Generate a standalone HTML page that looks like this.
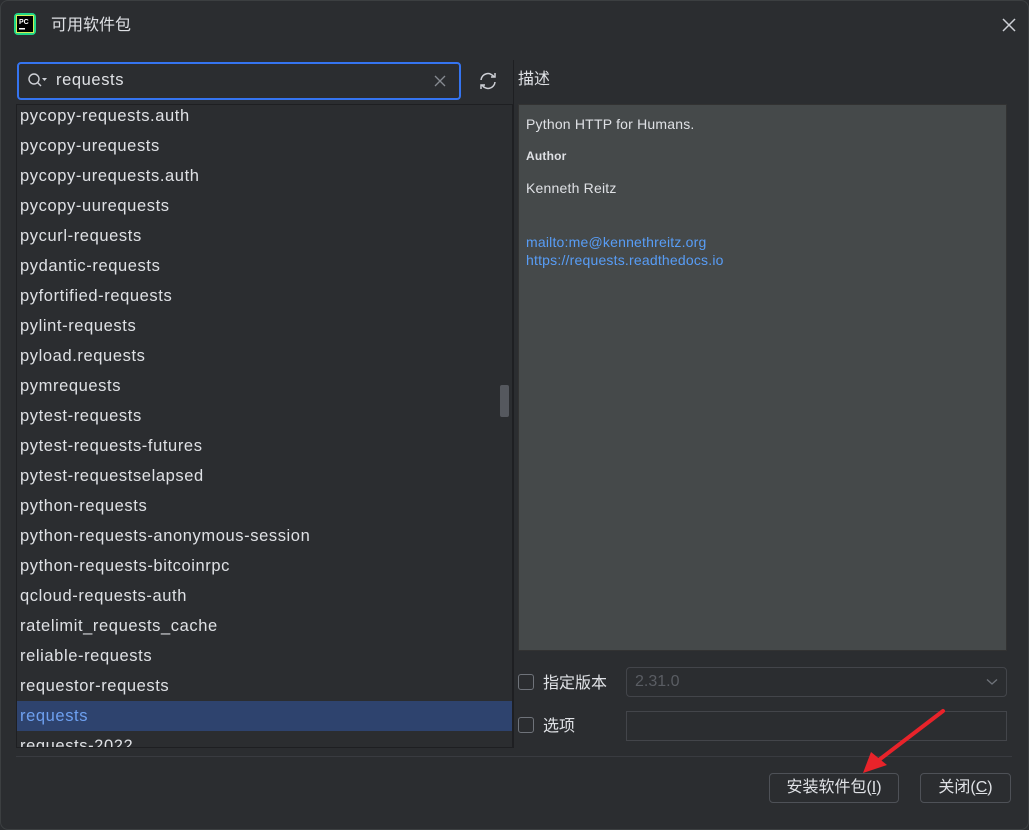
<!DOCTYPE html><html><head><meta charset="utf-8"><style>
body{margin:0;width:1029px;height:830px;background:#2b2d30;font-family:"Liberation Sans","Noto Sans CJK SC",sans-serif;color:#dfe1e5;position:relative;overflow:hidden}
.a{position:absolute}
.row{position:absolute;left:0;width:495px;height:30px;line-height:30px;padding-left:3px;font-size:16.5px;letter-spacing:0.6px;box-sizing:border-box}
.cb{position:absolute;width:16px;height:16px;border:1px solid #6f737a;border-radius:3px;box-sizing:border-box}
.btn{position:absolute;height:30px;border:1px solid #4e5157;border-radius:4px;box-sizing:border-box;text-align:center;line-height:28px;font-size:16px}
.cj{line-height:1;font-size:16px}
</style></head><body>
<div class="a" style="left:0;top:0;width:1029px;height:830px;border:1px solid #3c3f41;border-radius:8px;box-sizing:border-box"></div>
<svg class="a" style="left:14px;top:13px" width="22" height="22"><rect x="0" y="0" width="22" height="22" rx="4" fill="#21d789"/><rect x="2" y="2" width="18" height="18" fill="#fcf84a" opacity=".8"/><rect x="3" y="3" width="16" height="16" fill="#000"/><text x="5" y="11" font-size="7" fill="#fff" font-family="Liberation Sans" font-weight="bold">PC</text><rect x="5" y="15" width="6" height="1.5" fill="#fff"/></svg>
<div class="a cj" style="left:51px;top:18px;color:#dfe1e5">可用软件包</div>
<svg class="a" style="left:1001px;top:17px" width="16" height="16"><path d="M2 2L14 14M14 2L2 14" stroke="#ced0d6" stroke-width="1.5"/></svg>
<div class="a" style="left:16px;top:104px;width:497px;height:644px;border:1px solid #1e1f22;box-sizing:border-box;overflow:hidden">
<div class="row" style="top:-4px">pycopy-requests.auth</div>
<div class="row" style="top:26px">pycopy-urequests</div>
<div class="row" style="top:56px">pycopy-urequests.auth</div>
<div class="row" style="top:86px">pycopy-uurequests</div>
<div class="row" style="top:116px">pycurl-requests</div>
<div class="row" style="top:146px">pydantic-requests</div>
<div class="row" style="top:176px">pyfortified-requests</div>
<div class="row" style="top:206px">pylint-requests</div>
<div class="row" style="top:236px">pyload.requests</div>
<div class="row" style="top:266px">pymrequests</div>
<div class="row" style="top:296px">pytest-requests</div>
<div class="row" style="top:326px">pytest-requests-futures</div>
<div class="row" style="top:356px">pytest-requestselapsed</div>
<div class="row" style="top:386px">python-requests</div>
<div class="row" style="top:416px">python-requests-anonymous-session</div>
<div class="row" style="top:446px">python-requests-bitcoinrpc</div>
<div class="row" style="top:476px">qcloud-requests-auth</div>
<div class="row" style="top:506px">ratelimit_requests_cache</div>
<div class="row" style="top:536px">reliable-requests</div>
<div class="row" style="top:566px">requestor-requests</div>
<div class="row" style="top:596px;background:#2e436e;color:#6ea0f0">requests</div>
<div class="row" style="top:626px">requests-2022</div>
<div class="a" style="left:483px;top:280px;width:9px;height:32px;background:#55585e;border-radius:2px"></div>
</div>
<div class="a" style="left:17px;top:62px;width:444px;height:38px;border:2px solid #3574f0;border-radius:4px;box-sizing:border-box;background:#2b2d30"></div>
<svg class="a" style="left:27px;top:71px" width="24" height="20"><circle cx="7" cy="8" r="5" stroke="#ced0d6" stroke-width="1.4" fill="none"/><path d="M10.5 11.5L14 15" stroke="#ced0d6" stroke-width="1.4"/><path d="M15 7h5l-2.5 3z" fill="#ced0d6"/></svg>
<div class="a" style="left:56px;top:71px;font-size:16.5px;letter-spacing:0.6px;line-height:18px">requests</div>
<svg class="a" style="left:434px;top:75px" width="12" height="12"><path d="M1 1L11 11M11 1L1 11" stroke="#868a91" stroke-width="1.3"/></svg>
<svg class="a" style="left:477px;top:70px" width="22" height="22"><path d="M4 10a7 7 0 0 1 13-3M18 12a7 7 0 0 1-13 3" stroke="#ced0d6" stroke-width="1.5" fill="none"/><path d="M14 7h4V3" stroke="#ced0d6" stroke-width="1.5" fill="none"/><path d="M8 15H4v4" stroke="#ced0d6" stroke-width="1.5" fill="none"/></svg>
<div class="a" style="left:513px;top:60px;width:1px;height:688px;background:#1e1f22"></div>
<div class="a cj" style="left:518px;top:72px">描述</div>
<div class="a" style="left:518px;top:104px;width:489px;height:547px;background:#45494a;border:1px solid #323232;box-sizing:border-box;font-size:14px;color:#dfe1e5;letter-spacing:0.2px">
<div class="a" style="left:7px;top:11px">Python HTTP for Humans.</div>
<div class="a" style="left:7px;top:44px;font-size:12px;font-weight:bold">Author</div>
<div class="a" style="left:7px;top:75px">Kenneth Reitz</div>
<div class="a" style="left:7px;top:128px;color:#589df6;line-height:18px">mailto:me@kennethreitz.org<br>https://requests.readthedocs.io</div>
</div>
<div class="cb" style="left:518px;top:674px"></div>
<div class="a cj" style="left:543px;top:676px">指定版本</div>
<div class="a" style="left:626px;top:667px;width:381px;height:30px;border:1px solid #43454a;border-radius:4px;box-sizing:border-box;font-size:16px;color:#5a5d63;line-height:28px;padding-left:8px">2.31.0</div>
<svg class="a" style="left:986px;top:678px" width="12" height="8"><path d="M1 1.5L6 6L11 1.5" stroke="#6f737a" stroke-width="1.3" fill="none"/></svg>
<div class="cb" style="left:518px;top:717px"></div>
<div class="a cj" style="left:543px;top:719px">选项</div>
<div class="a" style="left:626px;top:711px;width:381px;height:30px;border:1px solid #43454a;box-sizing:border-box"></div>
<div class="a" style="left:16px;top:756px;width:996px;height:1px;background:#393b40"></div>
<div class="btn" style="left:769px;top:773px;width:130px">安装软件包(<u>I</u>)</div>
<div class="btn" style="left:920px;top:773px;width:91px">关闭(<u>C</u>)</div>
<svg class="a" style="left:855px;top:705px" width="95" height="75"><path d="M88 6L20 58" stroke="#e8232a" stroke-width="4" stroke-linecap="round"/><path d="M8 68L16 47L32 60z" fill="#e8232a"/></svg>
</body></html>
